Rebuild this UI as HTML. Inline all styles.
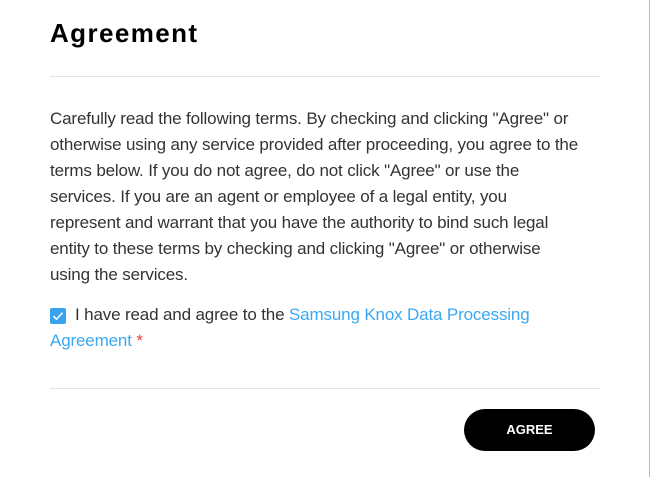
<!DOCTYPE html>
<html><head><style>
body{margin:0;width:651px;height:477px;background:#fff;font-family:"Liberation Sans",sans-serif;position:relative;overflow:hidden}
.edge{position:absolute;right:1px;top:0;width:1px;height:477px;background:#bbb}
h1{position:absolute;left:50px;top:18px;margin:0;font-size:26px;font-weight:bold;color:#000;letter-spacing:1.4px}
.hr{position:absolute;left:50px;width:550px;height:1px;background:#e2e2e2}
.p{position:absolute;left:50px;top:106px;font-size:17px;line-height:26px;color:#333;letter-spacing:-0.15px;white-space:nowrap}
.cb{position:absolute;left:50px;top:308px;width:16px;height:16px;background:#3aa3f0;border-radius:2px}
.lab{position:absolute;left:50px;top:302px;font-size:17px;line-height:26px;color:#333;letter-spacing:-0.15px;white-space:nowrap}
a{color:#3aa8f2;text-decoration:none}
.btn{position:absolute;left:464px;top:409px;width:131px;height:42px;background:#000;border-radius:21px;color:#fff;font-weight:bold;font-size:13px;line-height:42px;text-align:center}
</style></head><body>
<div class="edge"></div>
<h1>Agreement</h1>
<div class="hr" style="top:76px"></div>
<div class="p">Carefully read the following terms. By checking and clicking "Agree" or<br>otherwise using any service provided after proceeding, you agree to the<br>terms below. If you do not agree, do not click "Agree" or use the<br>services. If you are an agent or employee of a legal entity, you<br>represent and warrant that you have the authority to bind such legal<br>entity to these terms by checking and clicking "Agree" or otherwise<br>using the services.</div>
<div class="cb"><svg width="16" height="16" viewBox="0 0 16 16"><path d="M3.5 8.2l3 3 6-6.5" fill="none" stroke="#fff" stroke-width="1.5"/></svg></div>
<div class="lab"><span style="margin-left:25px">I have read and agree to the </span><a>Samsung Knox Data Processing</a><br><a>Agreement</a> <span style="color:#f03c3c">*</span></div>
<div class="hr" style="top:388px"></div>
<div class="btn">AGREE</div>
</body></html>
